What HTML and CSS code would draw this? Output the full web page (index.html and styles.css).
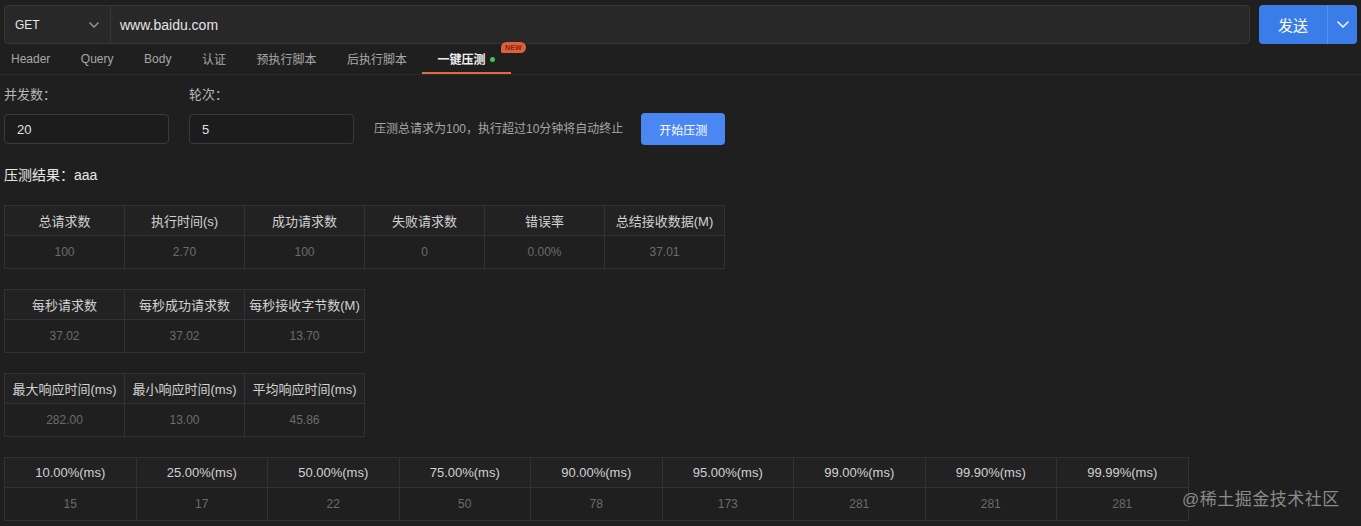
FILE: index.html
```html
<!DOCTYPE html>
<html lang="zh">
<head>
<meta charset="utf-8">
<title>压测</title>
<link rel="stylesheet" href="styles.css">
</head>
<body>
<div class="page">
  <div class="reqbar">
    <div class="urlbox">
      <div class="method">
        <span>GET</span>
        <svg class="chev" width="12" height="8" viewBox="0 0 12 8"><path d="M1.5 1.5 L6 6 L10.5 1.5" fill="none" stroke="#9a9a9a" stroke-width="1.3"/></svg>
      </div>
      <div class="url">www.baidu.com</div>
    </div>
    <div class="send">
      <span class="send-main">发送</span>
      <span class="send-drop"><svg width="14" height="9" viewBox="0 0 14 9"><path d="M1.5 1.5 L7 7 L12.5 1.5" fill="none" stroke="#ffffff" stroke-width="1.4"/></svg></span>
    </div>
  </div>

  <div class="tabs">
    <div class="tab first">Header</div>
    <div class="tab">Query</div>
    <div class="tab">Body</div>
    <div class="tab">认证</div>
    <div class="tab">预执行脚本</div>
    <div class="tab">后执行脚本</div>
    <div class="tab active">一键压测<span class="dot"></span><span class="badge">NEW</span></div>
  </div>

  <div class="form">
    <div class="field">
      <div class="label">并发数：</div>
      <div class="input">20</div>
    </div>
    <div class="field">
      <div class="label">轮次：</div>
      <div class="input">5</div>
    </div>
    <div class="hint">压测总请求为100，执行超过10分钟将自动终止</div>
    <div class="btn">开始压测</div>
  </div>

  <div class="result">压测结果：aaa</div>

  <table class="grid">
    <tr><th>总请求数</th><th>执行时间(s)</th><th>成功请求数</th><th>失败请求数</th><th>错误率</th><th>总结接收数据(M)</th></tr>
    <tr><td>100</td><td>2.70</td><td>100</td><td>0</td><td>0.00%</td><td>37.01</td></tr>
  </table>

  <table class="grid">
    <tr><th>每秒请求数</th><th>每秒成功请求数</th><th>每秒接收字节数(M)</th></tr>
    <tr><td>37.02</td><td>37.02</td><td>13.70</td></tr>
  </table>

  <table class="grid">
    <tr><th>最大响应时间(ms)</th><th>最小响应时间(ms)</th><th>平均响应时间(ms)</th></tr>
    <tr><td>282.00</td><td>13.00</td><td>45.86</td></tr>
  </table>

  <table class="grid wide">
    <tr><th>10.00%(ms)</th><th>25.00%(ms)</th><th>50.00%(ms)</th><th>75.00%(ms)</th><th>90.00%(ms)</th><th>95.00%(ms)</th><th>99.00%(ms)</th><th>99.90%(ms)</th><th>99.99%(ms)</th></tr>
    <tr><td>15</td><td>17</td><td>22</td><td>50</td><td>78</td><td>173</td><td>281</td><td>281</td><td>281</td></tr>
  </table>
</div>
<div class="watermark">@稀土掘金技术社区</div>
</body>
</html>
```

FILE: styles.css
```css
html, body {
  margin: 0;
  padding: 0;
  background: #1f1f1f;
  font-family: "Liberation Sans", "Noto Sans CJK SC", sans-serif;
  color: #cfcfcf;
  overflow: hidden;
}
.page {
  padding: 5px 4px 0 4px;
}
.reqbar {
  display: flex;
  gap: 9px;
  height: 39px;
}
.urlbox {
  flex: 1;
  display: flex;
  background: #282828;
  border: 1px solid #363636;
  border-radius: 4px;
  box-sizing: border-box;
}
.method {
  width: 106px;
  box-sizing: border-box;
  border-right: 1px solid #363636;
  display: flex;
  align-items: center;
  justify-content: space-between;
  padding: 0 10px 0 10px;
  font-size: 12px;
  color: #e6e6e6;
}
.url {
  display: flex;
  align-items: center;
  padding-left: 9px;
  font-size: 14px;
  color: #e4e4e4;
}
.send {
  width: 98px;
  display: flex;
  background: #3a7de8;
  border-radius: 4px;
  color: #fff;
}
.send-main {
  width: 68px;
  display: flex;
  align-items: center;
  justify-content: center;
  font-size: 15px;
  border-right: 1px solid #5590ee;
}
.send-drop {
  flex: 1;
  display: flex;
  align-items: center;
  justify-content: center;
}
.tabs {
  display: flex;
  height: 30px;
  border-bottom: 1px solid #2c2c2c;
  margin: 0 -4px;
}
.tab {
  position: relative;
  padding: 0 15px 0 15.5px;
  font-size: 12px;
  color: #a8a8a8;
  display: flex;
  align-items: center;
  height: 29px;
}
.tab.first {
  padding-left: 11px;
}
.tab.active {
  color: #f0f0f0;
  font-weight: bold;
  border-bottom: 2px solid #e06a43;
  height: 28px;
  padding-right: 16px;
}
.dot {
  width: 5px;
  height: 5px;
  border-radius: 50%;
  background: #4cbf5c;
  margin-left: 5px;
  margin-top: 3px;
}
.badge {
  position: absolute;
  left: 79px;
  top: -2px;
  background: #e0603c;
  color: #7b2612;
  font-size: 7px;
  font-weight: bold;
  line-height: 11px;
  padding: 0 4px;
  border-radius: 6px 6px 6px 2px;
  letter-spacing: 0.2px;
}
.form {
  display: flex;
  align-items: flex-end;
  margin-top: 11px;
}
.field {
  width: 165px;
  margin-right: 20px;
}
.label {
  font-size: 13px;
  color: #b8b8b8;
  height: 17px;
  line-height: 17px;
  margin-bottom: 11px;
}
.input {
  height: 30px;
  box-sizing: border-box;
  border: 1px solid #3a3a3a;
  border-radius: 4px;
  background: #1c1c1c;
  padding-left: 12px;
  font-size: 13px;
  color: #e0e0e0;
  display: flex;
  align-items: center;
}
.hint {
  font-size: 12px;
  color: #a6a6a6;
  height: 30px;
  line-height: 30px;
  margin-right: 18px;
}
.btn {
  width: 84px;
  height: 32px;
  margin-bottom: -1px;
  background: #4b87f2;
  border-radius: 4px;
  color: #fff;
  font-size: 12px;
  display: flex;
  align-items: center;
  justify-content: center;
}
.result {
  margin-top: 21px;
  font-size: 14px;
  color: #e8e8e8;
  height: 20px;
  line-height: 20px;
  margin-bottom: 20px;
}
.grid {
  border-collapse: collapse;
  table-layout: fixed;
  margin-bottom: 20px;
}
.grid th, .grid td {
  border: 1px solid #323232;
  width: 119px;
  text-align: center;
  padding: 0;
  white-space: nowrap;
}
.grid th {
  height: 29px;
  font-size: 13px;
  font-weight: normal;
  color: #d2d2d2;
  background: #222222;
}
.grid td {
  height: 32px;
  font-size: 12px;
  color: #6c6c6c;
  background: #1f1f1f;
}
.grid.wide th, .grid.wide td {
  width: 130.5px;
}
.watermark {
  position: absolute;
  left: 1182px;
  top: 485px;
  font-size: 17px;
  color: #8a8a8a;
  letter-spacing: 0.5px;
}
```
